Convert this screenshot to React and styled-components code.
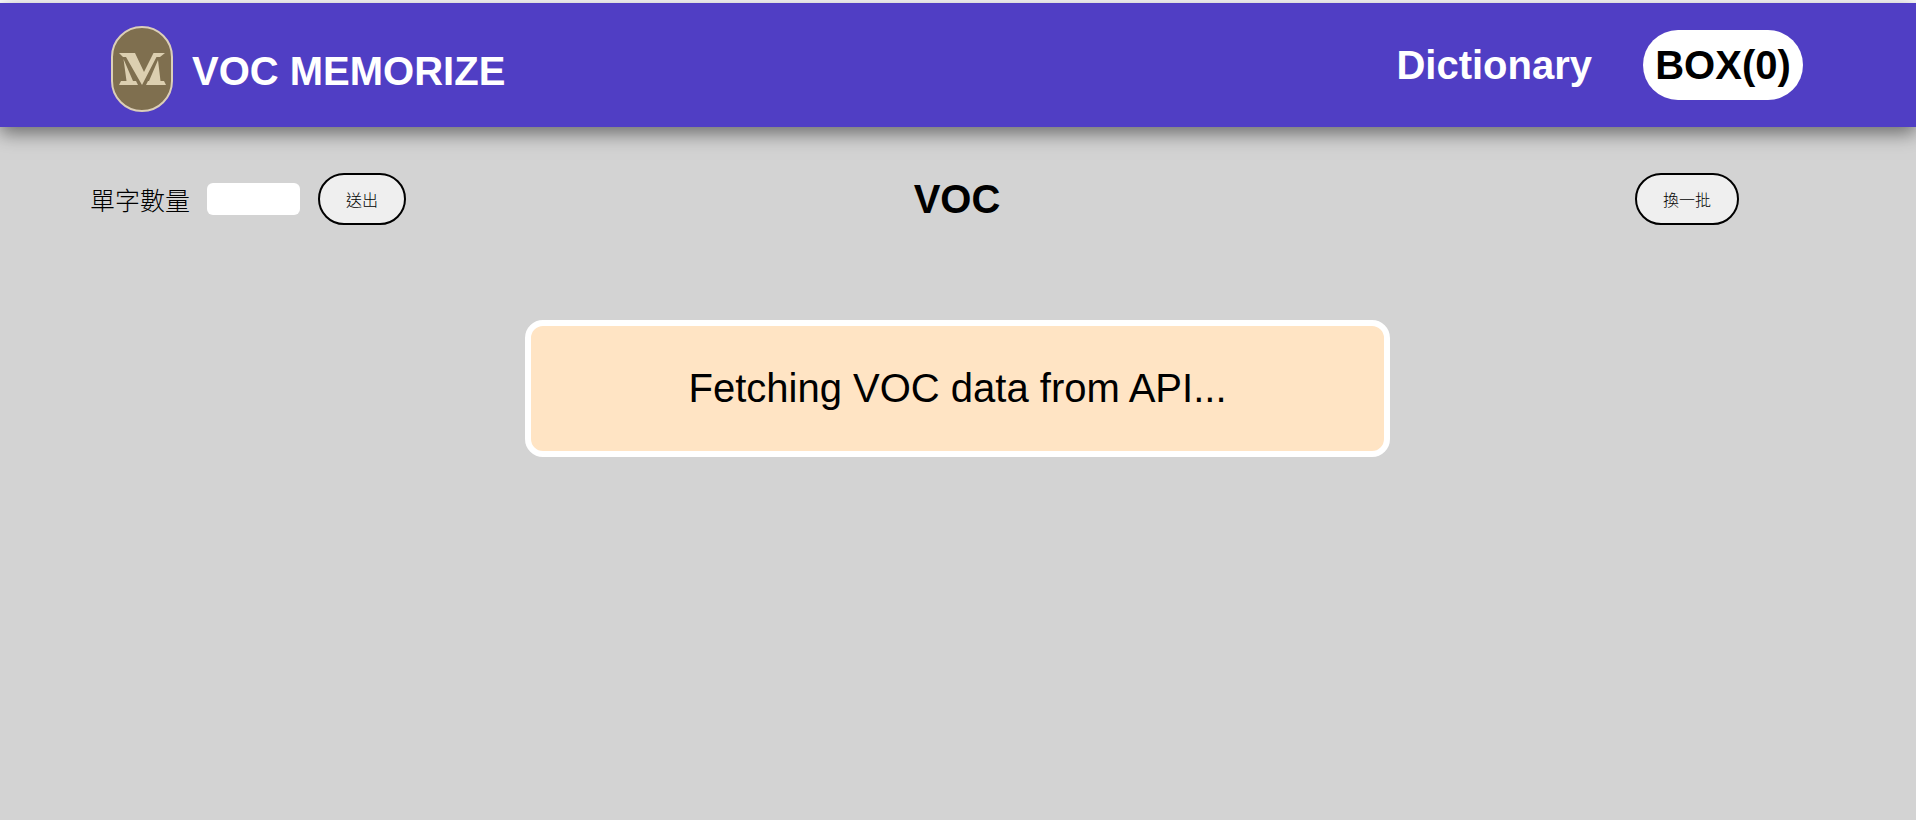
import React from "react";
import styled, { createGlobalStyle } from "styled-components";

const GlobalStyle = createGlobalStyle`
  html, body {
    margin: 0;
    padding: 0;
    height: 100%;
    overflow: hidden;
    background-color: #d3d3d3;
  }
  body {
    font-family: "Liberation Sans", "Noto Sans CJK TC", sans-serif;
    color: #000;
  }
`;

const TopLine = styled.div`
  height: 3px;
  background: #fff;
`;

const Header = styled.header`
  height: 124px;
  box-sizing: border-box;
  padding: 23px 113px 0 111px;
  display: flex;
  justify-content: space-between;
  align-items: flex-start;
  background-color: #503ec4;
  box-shadow: 0 6px 18px rgba(0, 0, 0, 0.5);
`;

const Brand = styled.div`
  display: flex;
  align-items: center;
  gap: 19px;
`;

const Title = styled.h1`
  margin: 5px 0 0;
  font-size: 40px;
  font-weight: 700;
  color: #fff;
`;

const Nav = styled.nav`
  display: flex;
  align-items: center;
  gap: 51px;
  padding-top: 4px;
`;

const NavLink = styled.a`
  font-size: 40px;
  font-weight: 700;
  color: #fff;
`;

const BoxPill = styled.a`
  width: 160px;
  height: 70px;
  display: flex;
  align-items: center;
  justify-content: center;
  font-size: 40px;
  font-weight: 700;
  color: #000;
  background-color: #fff;
  border-radius: 35px;
`;

const Toolbar = styled.div`
  display: grid;
  grid-template-columns: 1fr auto 1fr;
  align-items: center;
  margin-top: 46px;
  padding-right: 2px;
`;

const ToolLeft = styled.div`
  display: flex;
  align-items: center;
  padding-left: 90px;
`;

const ToolRight = styled.div`
  display: flex;
  justify-content: flex-end;
  padding-right: 175px;
`;

const CountLabel = styled.label`
  font-size: 25px;
  font-weight: 300;
  margin-right: 17px;
`;

const CountInput = styled.input`
  width: 93px;
  height: 32px;
  box-sizing: border-box;
  padding: 0;
  margin-right: 18px;
  border: none;
  border-radius: 6px;
  background-color: #fff;
`;

const PillButton = styled.button`
  width: ${(p) => p.$width}px;
  height: 52px;
  padding: 0;
  font-family: inherit;
  font-size: 16px;
  font-weight: 300;
  color: #000;
  background-color: #efefef;
  border: 2px solid #000;
  border-radius: 26px;
`;

const Heading = styled.h2`
  margin: 0;
  font-size: 40px;
  font-weight: 700;
`;

const Message = styled.div`
  width: 865px;
  height: 137px;
  box-sizing: border-box;
  margin: 95px 0 0 525px;
  display: flex;
  align-items: center;
  justify-content: center;
  font-size: 40px;
  background-color: #ffe4c4;
  border: 6px solid #fff;
  border-radius: 18px;
`;

const Logo = () => (
  <svg width="62" height="86" viewBox="0 0 62 86">
    <rect x="1" y="1" width="60" height="84" rx="30" fill="#7f6f4f" stroke="#dccfb8" strokeWidth="2" />
    <g fill="#dccfb0">
      {/* heavy left diagonal and thin right arm */}
      <path d="M8 27H24L33 46L42.5 27H54L49 31H45.5L31 59L15 31H12Z" />
      {/* left stem and foot */}
      <path d="M12.5 33L22 55H25L27 59H8L10 55H15.5Z" />
      {/* right stem and foot */}
      <path d="M47 34L49.5 55H53L55 59H35L37 55H38Z" />
    </g>
  </svg>
);

const App = () => {
  return (
    <>
      <GlobalStyle />
      <TopLine />
      <Header>
        <Brand>
          <Logo />
          <Title>VOC MEMORIZE</Title>
        </Brand>
        <Nav>
          <NavLink>Dictionary</NavLink>
          <BoxPill>BOX(0)</BoxPill>
        </Nav>
      </Header>
      <Toolbar>
        <ToolLeft>
          <CountLabel>單字數量</CountLabel>
          <CountInput type="text" />
          <PillButton $width={88}>送出</PillButton>
        </ToolLeft>
        <Heading>VOC</Heading>
        <ToolRight>
          <PillButton $width={104}>換一批</PillButton>
        </ToolRight>
      </Toolbar>
      <Message>Fetching VOC data from API...</Message>
    </>
  );
};

export default App;
